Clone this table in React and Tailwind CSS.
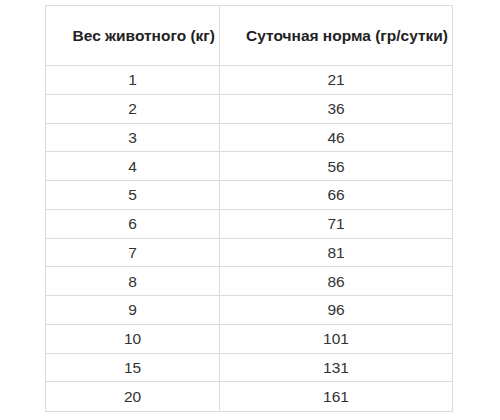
import React from "react";

const rows = [
  [1, 21],
  [2, 36],
  [3, 46],
  [4, 56],
  [5, 66],
  [6, 71],
  [7, 81],
  [8, 86],
  [9, 96],
  [10, 101],
  [15, 131],
  [20, 161],
];

export default function App() {
  return (
    <div className="w-[500px] h-[420px] bg-white pt-[5px] pl-[45px] font-['Liberation_Sans',Arial,sans-serif] text-[15.5px] text-[#222]">
      <div className="w-[408px] border border-[#dcdcdc]">
        <div className="grid grid-cols-[174px_1fr] h-[60px] border-b border-[#dcdcdc]">
          <div className="flex items-center justify-end pr-[4px] border-r border-[#dcdcdc] font-bold">
            Вес животного (кг)
          </div>
          <div className="flex items-center justify-end pr-[4px] font-bold">
            Суточная норма (гр/сутки)
          </div>
        </div>
        {rows.map(([w, n], i) => (
          <div
            key={i}
            className="grid grid-cols-[174px_1fr] h-[28.75px] border-b border-[#dcdcdc] last:border-b-0 text-[#333]"
          >
            <div className="flex items-center justify-center border-r border-[#dcdcdc]">{w}</div>
            <div className="flex items-center justify-center">{n}</div>
          </div>
        ))}
      </div>
    </div>
  );
}
